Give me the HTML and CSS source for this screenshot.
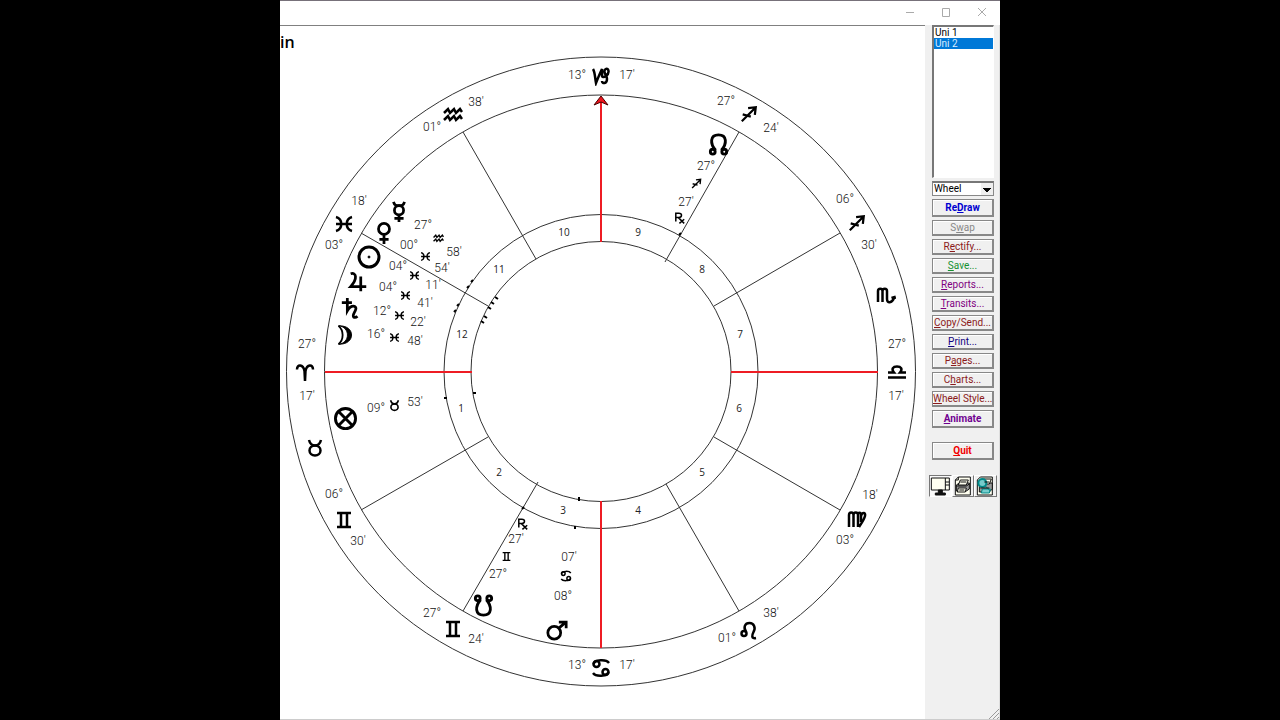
FILE: index.html
```html
<!doctype html>
<html lang="en">
    <head>
        <meta charset="utf-8">
        <title>Wheel</title>
        <link rel="stylesheet" href="styles.css">
    </head>
    <body>
        <svg class="defs" aria-hidden="true">
            <!-- signs -->
            <symbol id="aries" viewBox="0 0 20 20"><path d="M2 6.500C2 1 8 1 9.500 8L10 18L10.500 8C12 1 18 1 18 6.500"/></symbol>
            <symbol id="taurus" viewBox="0 0 20 20"><path d="M4 2C5 6 7 7.500 10 7.500S15 6 16 2"/><ellipse cx="10" cy="12.500" rx="5.500" ry="5"/></symbol>
            <symbol id="gemini" viewBox="0 0 20 20"><path d="M3 3H17M3 17H17M7 3V17M13 3V17"/></symbol>
            <symbol id="cancer" viewBox="0 0 20 20"><path d="M2.500 6C4 1.500 15 1 18 5M17.500 14C16 18.500 5 19 2 15"/><circle cx="5.500" cy="6" r="3"/><circle cx="14.500" cy="14" r="3"/></symbol>
            <symbol id="leo" viewBox="0 0 20 20"><circle cx="5" cy="12.500" r="2.500"/><path d="M7 11C4 6 6 2 10.500 2S17 7 14.500 11C13 14 12 18 17 17"/></symbol>
            <symbol id="virgo" viewBox="0 0 20 20"><path d="M2 17V5C2 1.500 6.500 1.500 6.500 5V17M6.500 5C6.500 1.500 11 1.500 11 5V17M11 5C11 2 14 2 14 5V12M14 6C15 2 19 2 18 6C17 10 14.500 13 12 17"/></symbol>
            <symbol id="libra" viewBox="0 0 20 20"><path d="M1 15.500H19M1 10.500H7C4 7 6 4.500 10 4.500S16 7 13 10.500H19"/></symbol>
            <symbol id="scorpio" viewBox="0 0 20 20"><path d="M2 16V5C2 2 6.500 2 6.500 5V16M6.500 5C6.500 2 11 2 11 5V13C11 18 16 17 18 12M15.500 12L18.500 11L19 13"/></symbol>
            <symbol id="sagittarius" viewBox="0 0 20 20"><path d="M2 18L17 3M9 3.500L17.500 2.500L16.500 11M3 10.500L12 13"/></symbol>
            <symbol id="capricorn" viewBox="0 0 20 20"><path d="M2 3C4 6 4 12 5 17C7 12 9 7 11 3V10C12 13 18 9 17.500 5C17 1 13 3 13.500 6C14 9 16 10 16 13C16 18 11 18 11 15"/></symbol>
            <symbol id="aquarius" viewBox="0 0 20 20"><path d="M1 8L5 4L7 8L11 4L13 8L17 4L19 7M1 15L5 11L7 15L11 11L13 15L17 11L19 14"/></symbol>
            <symbol id="pisces" viewBox="0 0 20 20"><path d="M2 3C9 5 9 15 2 17M18 3C11 5 11 15 18 17M2 10H18"/></symbol>

            <!-- planets and points -->
            <symbol id="sun" viewBox="0 0 24 24"><circle cx="12" cy="12" r="10"/><circle class="solid" cx="12" cy="12" r="1"/></symbol>
            <symbol id="moon" viewBox="0 0 24 24"><path class="solid" d="M6 2C25 1 25 23 6 22C19 21 19 3 6 2Z"/><path class="thin" d="M6 2C12 7 12 17 6 22"/></symbol>
            <symbol id="mercury" viewBox="0 0 24 24"><path d="M6 1C7 5 9 5 12 5S17 5 18 1M12 15V23M7 19H17"/><circle cx="12" cy="10" r="5"/></symbol>
            <symbol id="venus" viewBox="0 0 24 24"><circle cx="12" cy="7.500" r="6"/><path d="M12 14V24M7 19H17"/></symbol>
            <symbol id="mars" viewBox="0 0 24 24"><circle cx="9" cy="15" r="7"/><path d="M14 10L21 4M14 3.500H22V10"/></symbol>
            <symbol id="jupiter" viewBox="0 0 24 24"><path d="M4 3C10 1 12 8 4 17H21M15 6V22"/></symbol>
            <symbol id="saturn" viewBox="0 0 24 24"><path d="M2 6H13M8 1V15C12 8 19 9 17 14C16 17 13 20 15 22C17 23 18 22 19 21"/></symbol>
            <symbol id="fortune" viewBox="0 0 24 24"><circle cx="12" cy="12" r="10.500"/><path d="M5 5L19 19M19 5L5 19"/></symbol>
            <symbol id="node" viewBox="0 0 24 24"><path d="M9 18C3 11 3 2 12 2S21 11 15 18"/><circle cx="6" cy="19.500" r="2.500"/><circle cx="18" cy="19.500" r="2.500"/></symbol>
            <symbol id="retro" viewBox="0 0 20 20"><path d="M3 16V2H8C14 2 14 9 8 9H3M7 9L17 19M17 12L9 19"/></symbol>
        </svg>

        <div class="window">
            <div class="titlebar">
                <button class="title-btn" aria-label="Minimize"><svg viewBox="0 0 10 10"><path d="M1 4.500H9"/></svg></button>
                <button class="title-btn" aria-label="Maximize"><svg viewBox="0 0 10 10"><path d="M1.500 0.500H8.500V8.500H1.500Z"/></svg></button>
                <button class="title-btn" aria-label="Close"><svg viewBox="0 0 10 10"><path d="M1 0L9 8M9 0L1 8"/></svg></button>
            </div>

            <div class="content">
                <div class="chart">
                    <svg class="wheel" viewBox="280 26 645 693">
                        <text class="heading" x="280" y="48">in</text>

                        <!-- rings -->
                        <circle class="ring" cx="601" cy="371.500" r="314.500"/>
                        <circle class="ring" cx="601" cy="371.500" r="276.500"/>
                        <circle class="ring" cx="601" cy="371.500" r="157"/>
                        <circle class="ring" cx="601" cy="371.500" r="130"/>

                        <!-- house cusps -->
                        <path class="cusp" d="M463 132L536 259M361 233L488 306M361 510L488 437M463 611L538 482M739 611L666 484M840 510L714 437M840 233L714 306M739 132L665 262"/>
                        <path class="axis" d="M325 372H472M731 372H878M601 100V242M601 501V648"/>
                        <path class="arrow" d="M601 96L608 105L601 102L594 105Z"/>
                        <path class="tick" d="M471 282L473 280M467 288L469 286M457 306L459 304M454 312L456 310M495 297L498 299M491 302L494 304M488 307L491 309M484 316L487 318M481 321L484 323M444 398H447M473 393H476M575 526V529M579 497V501M522 509L524 507M679 235L681 233"/>

                        <!-- house numbers -->
                        <g class="house">
                            <text x="461" y="412">1</text>
                            <text x="499" y="476">2</text>
                            <text x="563" y="514">3</text>
                            <text x="638" y="514">4</text>
                            <text x="702" y="476">5</text>
                            <text x="739" y="412">6</text>
                            <text x="740" y="338">7</text>
                            <text x="702" y="273">8</text>
                            <text x="638" y="236">9</text>
                            <text x="564" y="236">10</text>
                            <text x="499" y="273">11</text>
                            <text x="462" y="338">12</text>
                        </g>

                        <!-- degrees and minutes on the cusps -->
                        <g class="degree">
                            <text x="577" y="79">13°</text><text x="627" y="79">17'</text>
                            <text x="726" y="105">27°</text><text x="771" y="132">24'</text>
                            <text x="845" y="203">06°</text><text x="869" y="249">30'</text>
                            <text x="897" y="348">27°</text><text x="896" y="400">17'</text>
                            <text x="870" y="499">18'</text><text x="845" y="544">03°</text>
                            <text x="771" y="617">38'</text><text x="727" y="642">01°</text>
                            <text x="577" y="669">13°</text><text x="627" y="669">17'</text>
                            <text x="432" y="617">27°</text><text x="476" y="643">24'</text>
                            <text x="334" y="498">06°</text><text x="358" y="545">30'</text>
                            <text x="307" y="348">27°</text><text x="307" y="400">17'</text>
                            <text x="359" y="205">18'</text><text x="334" y="249">03°</text>
                            <text x="476" y="106">38'</text><text x="432" y="131">01°</text>
                        </g>

                        <g class="sign">
                            <use href="#capricorn" x="591" y="66" width="20" height="20"/>
                            <use href="#sagittarius" x="740" y="105" width="18" height="18"/>
                            <use href="#sagittarius" x="848" y="214" width="18" height="18"/>
                            <use href="#scorpio" x="876" y="286" width="20" height="20"/>
                            <use href="#libra" x="887" y="362" width="20" height="20"/>
                            <use href="#virgo" x="847" y="510" width="20" height="20"/>
                            <use href="#leo" x="739" y="621" width="20" height="20"/>
                            <use href="#cancer" x="591" y="658" width="20" height="20"/>
                            <use href="#gemini" x="443" y="619" width="20" height="20"/>
                            <use href="#gemini" x="334" y="510" width="20" height="20"/>
                            <use href="#taurus" x="305" y="438" width="20" height="20"/>
                            <use href="#aries" x="295" y="363" width="20" height="20"/>
                            <use href="#pisces" x="334" y="214" width="20" height="20"/>
                            <use href="#aquarius" x="443" y="105" width="20" height="20"/>
                        </g>

                        <g class="planet">
                            <use href="#mercury" x="388" y="201" width="22" height="22"/>
                            <use href="#venus" x="373" y="222" width="22" height="22"/>
                            <use href="#sun" x="357" y="245" width="24" height="24"/>
                            <use href="#jupiter" x="347" y="271" width="22" height="22"/>
                            <use href="#saturn" x="340" y="297" width="22" height="22"/>
                            <use href="#moon" x="333" y="324" width="22" height="22"/>
                            <use href="#fortune" x="334" y="407" width="23" height="23"/>
                            <use href="#node" x="707" y="133" width="23" height="23"/>
                            <use href="#node" x="472" y="594" width="23" height="23" transform="rotate(180 483.500 605.500)"/>
                            <use href="#mars" x="546" y="619" width="22" height="22"/>
                        </g>

                        <!-- planet positions -->
                        <g class="degree">
                            <text x="423" y="229">27°</text><text x="454" y="256">58'</text>
                            <text x="409" y="249">00°</text><text x="442" y="272">54'</text>
                            <text x="398" y="270">04°</text><text x="433" y="289">11'</text>
                            <text x="388" y="291">04°</text><text x="425" y="307">41'</text>
                            <text x="382" y="315">12°</text><text x="418" y="326">22'</text>
                            <text x="376" y="338">16°</text><text x="415" y="345">48'</text>
                            <text x="376" y="412">09°</text><text x="415" y="406">53'</text>
                            <text x="706" y="170">27°</text><text x="686" y="206">27'</text>
                            <text x="516" y="543">27'</text><text x="498" y="578">27°</text>
                            <text x="569" y="561">07'</text><text x="563" y="600">08°</text>
                        </g>
                        <g class="sign-small">
                            <use href="#aquarius" x="433" y="233" width="11" height="11"/>
                            <use href="#pisces" x="420" y="251" width="11" height="11"/>
                            <use href="#pisces" x="409" y="270" width="11" height="11"/>
                            <use href="#pisces" x="400" y="290" width="11" height="11"/>
                            <use href="#pisces" x="394" y="310" width="11" height="11"/>
                            <use href="#pisces" x="389" y="332" width="11" height="11"/>
                            <use href="#taurus" x="388" y="399" width="13" height="13"/>
                            <use href="#sagittarius" x="691" y="178" width="11" height="11"/>
                            <use href="#gemini" x="501" y="551" width="11" height="11"/>
                            <use href="#cancer" x="560" y="570" width="12" height="12"/>
                            <use href="#retro" x="674" y="212" width="12" height="12"/>
                            <use href="#retro" x="517" y="518" width="12" height="12"/>
                        </g>
                    </svg>
                </div>

                <div class="panel">
                    <select class="chart-list" size="2" aria-label="Charts">
                        <option>Uni 1</option>
                        <option selected>Uni 2</option>
                    </select>
                    <select class="view" aria-label="View">
                        <option>Wheel</option>
                    </select>
                    <button class="btn strong blue">Re<u>D</u>raw</button>
                    <button class="btn gray" disabled>S<u>w</u>ap</button>
                    <button class="btn red">R<u>e</u>ctify...</button>
                    <button class="btn green"><u>S</u>ave...</button>
                    <button class="btn purple"><u>R</u>eports...</button>
                    <button class="btn purple"><u>T</u>ransits...</button>
                    <button class="btn red"><u>C</u>opy/Send...</button>
                    <button class="btn navy"><u>P</u>rint...</button>
                    <button class="btn red">P<u>a</u>ges...</button>
                    <button class="btn red">C<u>h</u>arts...</button>
                    <button class="btn red"><u>W</u>heel Style...</button>
                    <button class="btn strong violet"><u>A</u>nimate</button>
                    <button class="btn strong quit"><u>Q</u>uit</button>
                    <div class="tools">
                        <button class="tool pressed" aria-label="Screen">
                            <svg viewBox="0 0 20 20"><path class="paper" d="M1 2H19V14H1Z"/><path d="M15 2V14M15 6H19M15 9H19"/><path class="ink" d="M8 14H12V17H15V19H5V17H8Z"/></svg>
                        </button>
                        <button class="tool" aria-label="Printer">
                            <svg viewBox="0 0 20 20"><path class="paper" d="M5 1H17V19H2V4Z"/><path d="M2 4H5V1"/><path class="fill" d="M3 9L6 7H16V13L13 15H3Z"/><path class="paper" d="M7 4H15L13 9H5ZM5 12H13L12 16H4Z"/><path d="M7 6H13M3 10H13L16 8M6 14H11"/></svg>
                        </button>
                        <button class="tool" aria-label="Printer setup">
                            <svg viewBox="0 0 20 20"><path class="paper" d="M5 1H17V19H2V4Z"/><path class="fill" d="M4 9L7 7H17V13L14 16H4Z"/><path class="paper" d="M8 3H16L14 8H6Z"/><path class="teal" d="M7 13H15L14 17H6ZM10 10L15 15"/><circle class="teal lens" cx="7" cy="7" r="4"/><path d="M9 6H14M5 12H14"/></svg>
                        </button>
                    </div>
                    <svg class="grip" viewBox="0 0 10 10"><path d="M0 10L10 0M4 10L10 4M8 10L10 8"/></svg>
                </div>
            </div>
        </div>
    </body>
</html>
```
FILE: styles.css
```css
body{
    margin: 0;
    background: #000;
    font-family: Roboto, "Liberation Sans", Arial, sans-serif;
    font-size: 10px;
}
.defs{
    position: absolute;
    width: 0;
    height: 0;
}

/* WINDOW */
.window{
    box-sizing: border-box;
    height: 100vh;
    aspect-ratio: 1 / 1;
    margin: 0 auto;
    display: flex;
    flex-direction: column;
    background: #fff;
    border-top: 1px solid #77717a;
    border-bottom: 1px solid #ccc;
}
.titlebar{
    height: 24px;
    display: flex;
    justify-content: flex-end;
    align-items: center;
}
.title-btn{
    width: 36px;
    height: 22px;
    padding: 0;
    border: none;
    background: none;
    display: flex;
    align-items: center;
    justify-content: center;
}
.title-btn svg{
    width: 10px;
    height: 10px;
    fill: none;
    stroke: #aaa;
}
.content{
    flex: 1;
    min-height: 0;
    display: flex;
}

/* CHART */
.chart{
    flex: 1;
    min-width: 0;
    border-top: 1px solid #808080;
}
.wheel{
    display: block;
    width: 100%;
    height: 100%;
}
.heading{
    font: 600 16px "Open Sans", sans-serif;
}
.ring, .cusp{
    fill: none;
    stroke: #333;
    stroke-width: 1;
}
.axis{
    stroke: #ee1c24;
    stroke-width: 2;
}
.arrow{
    fill: #f0141c;
    stroke: #400;
}
.tick{
    stroke: #000;
    stroke-width: 2;
}
.house{
    font: 10px "Open Sans", sans-serif;
    fill: #222;
    text-anchor: middle;
}
.degree{
    font: 300 12px Roboto, sans-serif;
    fill: #111;
    text-anchor: middle;
}
.sign, .planet, .sign-small{
    fill: none;
    stroke: #000;
    stroke-width: 2.500;
}
.planet{
    stroke-width: 3;
}
.solid{
    fill: #000;
    stroke-width: 1;
}
.thin{
    stroke-width: 2;
}

/* SIDE PANEL */
.panel{
    box-sizing: border-box;
    width: 75px;
    display: flex;
    flex-direction: column;
    gap: 3px;
    padding: 0 5px 0 7px;
    background: #f0f0f0;
    border-right: 1px solid #ddd;
}
.chart-list{
    box-sizing: border-box;
    height: 153px;
    padding: 0;
    border: 1px solid #fff;
    border-top: 2px solid #777;
    border-left: 2px solid #777;
    border-radius: 0;
    outline: none;
    background: #fff;
    font: inherit;
    overflow: hidden;
}
.chart-list option{
    height: 11px;
    min-height: 11px;
    padding: 0 1px;
    line-height: 11px;
}
.chart-list option:checked{
    background: #0078d7 linear-gradient(#0078d7, #0078d7);
    -webkit-text-fill-color: #d8ecff;
}
.view{
    box-sizing: border-box;
    height: 15px;
    padding: 0 1px;
    border: 1px solid #888;
    border-top: 2px solid #777;
    border-radius: 0;
    appearance: none;
    font: inherit;
    line-height: 12px;
    background: conic-gradient(from 315deg at 50% 100%, #000 90deg, transparent 0) right 2px top 5px / 8px 4px no-repeat,
                linear-gradient(#eee, #eee) right 0 top 0 / 12px 100% no-repeat, #fff;
}
.btn{
    box-sizing: border-box;
    height: 16px;
    padding: 0;
    border: 1px solid #888;
    border-right: 2px solid #888;
    border-bottom: 2px solid #888;
    box-shadow: inset 1px 1px #fff;
    background: #f0f0f0;
    font: inherit;
    line-height: 13px;
    white-space: nowrap;
}
.strong{
    height: 18px;
    font-weight: bold;
    line-height: 15px;
}
.blue{
    color: #0000d0;
}
.gray{
    color: #888;
}
.red{
    color: #8b1a1a;
}
.green{
    color: #159030;
}
.purple{
    color: #800080;
}
.navy{
    color: #100080;
}
.violet{
    color: #700090;
}
.quit{
    margin-top: 11px;
    color: #f00000;
}

/* TOOLS */
.tools{
    display: flex;
    margin: 12px -3px 0;
}
.tool{
    box-sizing: border-box;
    flex: 1;
    height: 22px;
    padding: 0;
    border: 1px solid #fff;
    border-right-color: #777;
    border-bottom-color: #777;
    background: #f0f0f0;
}
.pressed{
    border-color: #777 #fff #fff #777;
    background: #fafafa;
}
.tool svg{
    display: block;
    width: 100%;
    height: 20px;
    fill: none;
    stroke: #111;
}
.tool .paper{
    fill: #fffff0;
}
.tool .ink{
    fill: #111;
}
.tool .fill{
    fill: #999;
}
.tool .teal{
    fill: #7cc;
    stroke: #088;
}
.tool .lens{
    stroke-width: 2;
}
.grip{
    width: 10px;
    height: 10px;
    margin: auto -5px 0 auto;
    stroke: #999;
}
```
